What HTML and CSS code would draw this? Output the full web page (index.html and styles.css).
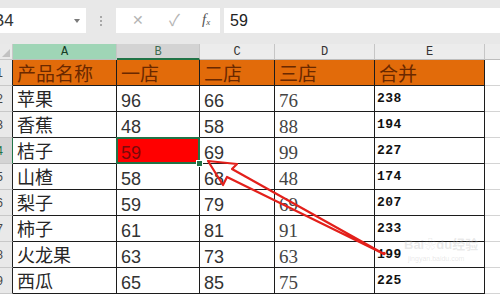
FILE: index.html
```html
<!DOCTYPE html>
<html lang="zh">
<head>
<meta charset="utf-8">
<title>Sheet</title>
<link rel="stylesheet" href="styles.css">
</head>
<body>
<div class="app">
  <div class="toolbar">
    <div class="namebox"><span class="ref">B4</span><span class="drop"></span></div>
    <div class="grip"><i></i><i></i><i></i></div>
    <div class="fxbox">
      <span class="btn cancel">✕</span>
      <span class="btn ok">✓</span>
      <span class="btn fx">f<sub>x</sub></span>
    </div>
    <div class="formula">59</div>
  </div>
  <div class="sheet">
    <div class="corner"></div>
    <div class="ch cha">A</div>
    <div class="ch chb">B</div>
    <div class="ch">C</div>
    <div class="ch">D</div>
    <div class="ch">E</div>
    <div class="ch chf"></div>

    <div class="rh">1</div>
    <div class="c hd">产品名称</div><div class="c hd">一店</div><div class="c hd">二店</div><div class="c hd">三店</div><div class="c hd">合并</div><div class="c f"></div>

    <div class="rh">2</div>
    <div class="c t">苹果</div><div class="c n">96</div><div class="c n">66</div><div class="c s">76</div><div class="c b">238</div><div class="c f"></div>

    <div class="rh">3</div>
    <div class="c t">香蕉</div><div class="c n">48</div><div class="c n">58</div><div class="c s">88</div><div class="c b">194</div><div class="c f"></div>

    <div class="rh rhsel">4</div>
    <div class="c t">桔子</div><div class="c n sel">59</div><div class="c n">69</div><div class="c s">99</div><div class="c b">227</div><div class="c f"></div>

    <div class="rh">5</div>
    <div class="c t">山楂</div><div class="c n">58</div><div class="c n">68</div><div class="c s">48</div><div class="c b">174</div><div class="c f"></div>

    <div class="rh">6</div>
    <div class="c t">梨子</div><div class="c n">59</div><div class="c n">79</div><div class="c s">69</div><div class="c b">207</div><div class="c f"></div>

    <div class="rh">7</div>
    <div class="c t">柿子</div><div class="c n">61</div><div class="c n">81</div><div class="c s">91</div><div class="c b">233</div><div class="c f"></div>

    <div class="rh">8</div>
    <div class="c t">火龙果</div><div class="c n">63</div><div class="c n">73</div><div class="c s">63</div><div class="c b">199</div><div class="c f"></div>

    <div class="rh">9</div>
    <div class="c t">西瓜</div><div class="c n">65</div><div class="c n">85</div><div class="c s">75</div><div class="c b">225</div><div class="c f"></div>
  </div>

  <svg class="arrow" width="500" height="294" viewBox="0 0 500 294">
    <polygon points="208,161 237,164 232,169 384,254 227,177 223,185" fill="none" stroke="#e3201b" stroke-width="2.2" stroke-linejoin="round"/>
    <circle cx="384" cy="253.5" r="1.8" fill="#e3201b"/>
  </svg>

  <div class="watermark">
    <div class="wm-main">Bai<span class="paw">❀</span>du经验</div>
    <div class="wm-sub">jingyan.baidu.com</div>
  </div>
</div>
</body>
</html>
```

FILE: styles.css
```css
html, body {
  margin: 0;
  padding: 0;
  background: #ffffff;
}

.app {
  position: relative;
  width: 500px;
  height: 294px;
  overflow: hidden;
  font-family: "Liberation Sans", "Noto Sans CJK SC", sans-serif;
}

/* ---------- toolbar ---------- */
.toolbar {
  height: 44px;
  box-sizing: border-box;
  padding-top: 8px;
  background: #e8e8e8;
  display: flex;
  align-items: flex-start;
}

.namebox {
  width: 86px;
  height: 25px;
  background: #ffffff;
  display: flex;
  align-items: center;
  justify-content: space-between;
  padding-right: 6px;
  box-sizing: border-box;
  overflow: hidden;
}

.ref {
  margin-left: -7px;
  font-size: 17px;
  color: #333333;
}

.drop {
  width: 0;
  height: 0;
  border-left: 3.5px solid transparent;
  border-right: 3.5px solid transparent;
  border-top: 4px solid #7a7a7a;
}

.grip {
  width: 30px;
  height: 25px;
  display: flex;
  flex-direction: column;
  align-items: center;
  justify-content: center;
  gap: 2px;
}

.grip i {
  display: block;
  width: 2px;
  height: 2px;
  background: #a8a8a8;
}

.fxbox {
  width: 104px;
  height: 25px;
  background: #ffffff;
  display: flex;
  align-items: center;
  box-sizing: border-box;
  padding-left: 16px;
}

.btn {
  color: #b4b4b4;
  font-size: 15px;
  line-height: 25px;
}

.cancel { width: 37px; font-size: 14px; }
.ok { width: 33px; font-size: 16px; }

.fx {
  font-family: "Liberation Serif", serif;
  font-style: italic;
  color: #555555;
  font-size: 15px;
}

.fx sub {
  font-size: 9px;
  vertical-align: -1px;
}

.formula {
  flex: 1;
  margin-left: 4px;
  height: 25px;
  background: #ffffff;
  font-size: 16px;
  line-height: 26px;
  padding-left: 6px;
  color: #222222;
}

/* ---------- sheet ---------- */
.sheet {
  display: grid;
  grid-template-columns: 13px 104px 83px 75px 100px 110px 15px;
  grid-template-rows: 16px repeat(9, 26px);
}

.corner {
  background: #e9e9e9;
  border-right: 1px solid #c8c8c8;
  border-bottom: 1px solid #c8c8c8;
  position: relative;
}

.corner::after {
  content: "";
  position: absolute;
  right: 2px;
  bottom: 2px;
  border-left: 8px solid transparent;
  border-bottom: 8px solid #c2c2c2;
}

.ch {
  background: #ececec;
  border-right: 1px solid #c6c6c6;
  border-bottom: 1px solid #bdbdbd;
  font-family: "Liberation Mono", monospace;
  font-size: 12px;
  line-height: 16px;
  text-align: center;
  color: #333333;
  box-sizing: border-box;
}

.cha {
  background: #9fd5b6;
  color: #173d26;
}

.chb {
  background: #d3d3d3;
  color: #3d6b50;
  border-bottom: 2px solid #217346;
}

.chf {
  border-right: none;
}

.rh {
  background: #e9e9e9;
  border-right: 1px solid #222222;
  border-bottom: 1px solid #c8c8c8;
  font-size: 12px;
  line-height: 26px;
  direction: rtl;
  text-align: right;
  padding-right: 9px;
  overflow: hidden;
  white-space: nowrap;
  color: #444444;
  box-sizing: border-box;
}

.rhsel {
  background: #d4d4d4;
  color: #217346;
  border-right: 1px solid #217346;
}

.c {
  border-right: 1px solid #1c1c1c;
  border-bottom: 1px solid #1c1c1c;
  box-sizing: border-box;
  padding-left: 4px;
  white-space: nowrap;
  overflow: hidden;
}

.hd {
  background: #e26b0a;
  color: #6a2800;
  font-family: "Noto Sans CJK SC", sans-serif;
  font-size: 19px;
  line-height: 25px;
}

.t {
  font-family: "Noto Sans CJK SC", sans-serif;
  font-size: 18px;
  line-height: 25px;
  color: #262626;
}

.n {
  font-family: "Liberation Sans", sans-serif;
  font-size: 18px;
  line-height: 22px;
  padding-top: 4px;
  color: #333333;
}

.s {
  font-family: "Liberation Serif", serif;
  font-size: 19px;
  line-height: 22px;
  padding-top: 4px;
  color: #444444;
}

.b {
  font-family: "Liberation Mono", monospace;
  font-weight: bold;
  font-size: 13px;
  letter-spacing: 0.5px;
  line-height: 26px;
  padding-left: 2px;
  color: #111111;
}

.f {
  border-right: none;
  border-bottom: 1px solid #d4d4d4;
}

.sel {
  position: relative;
  overflow: visible;
  background: #ff0000;
  color: #7a0a0a;
}

.sel::after {
  content: "";
  position: absolute;
  top: -1px;
  left: -1px;
  right: -1px;
  bottom: -1px;
  border: 2px solid #217346;
}

.sel::before {
  content: "";
  position: absolute;
  right: -4px;
  bottom: -4px;
  width: 5px;
  height: 5px;
  background: #217346;
  border: 1px solid #ffffff;
  z-index: 2;
}

/* ---------- overlays ---------- */
.arrow {
  position: absolute;
  top: 0;
  left: 0;
  pointer-events: none;
}

.watermark {
  position: absolute;
  left: 404px;
  top: 236px;
  white-space: nowrap;
  color: rgba(180, 180, 180, 0.3);
  pointer-events: none;
}

.wm-main {
  font-family: "Liberation Sans", "Noto Sans CJK SC", sans-serif;
  font-size: 13px;
  font-weight: bold;
  line-height: 17px;
}

.paw {
  font-size: 12px;
}

.wm-sub {
  font-size: 7px;
  line-height: 9px;
  padding-left: 4px;
}
```
